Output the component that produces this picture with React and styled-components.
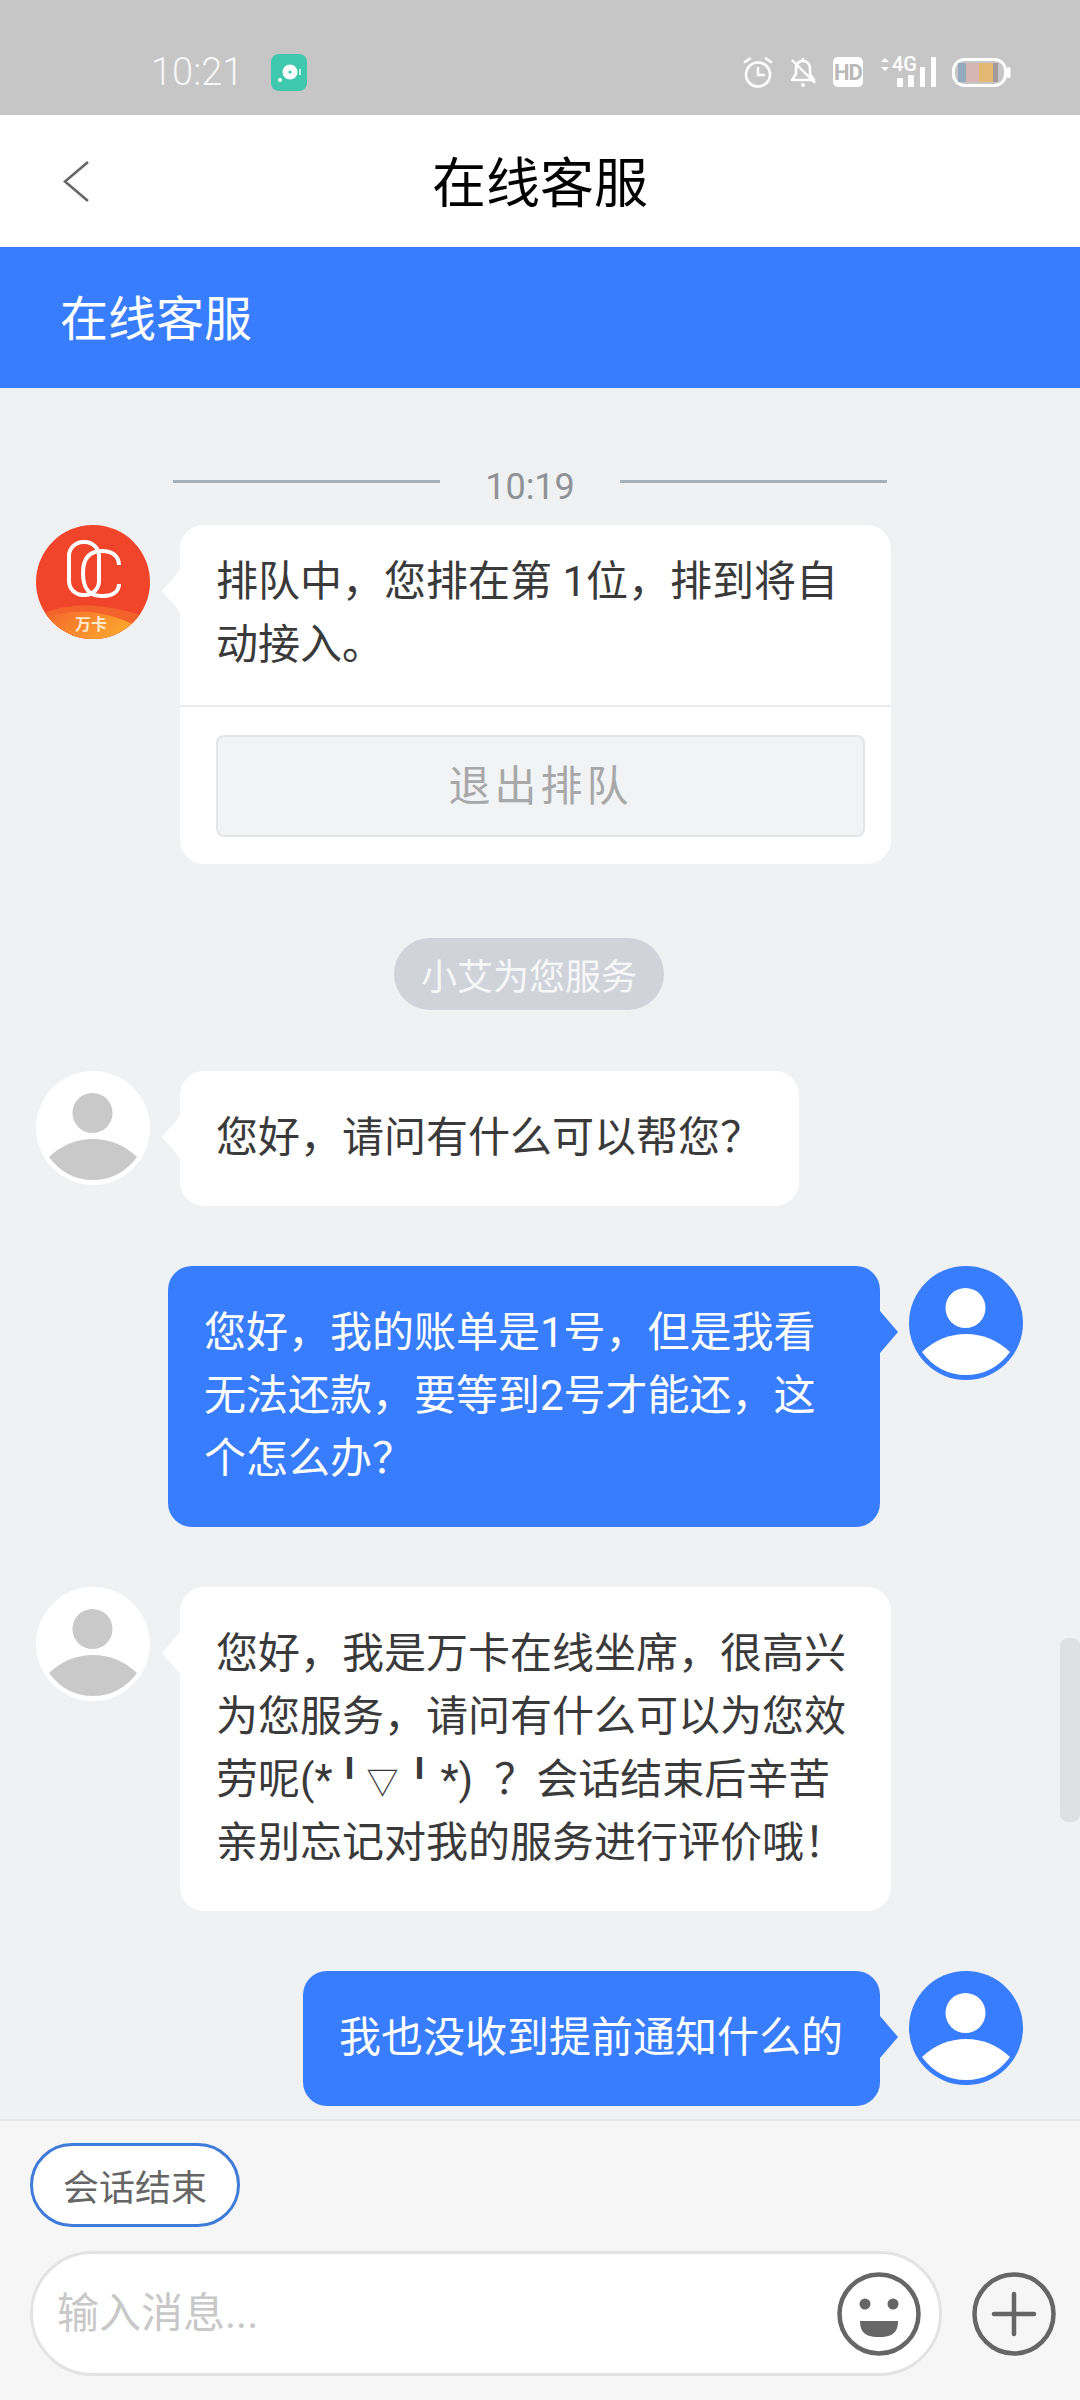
import React from "react"
import styled, { createGlobalStyle } from "styled-components"

const BLUE = "#377dfe"

function App() {
  return (
    <Screen>
      <GlobalStyle />
      <StatusBar>
        <StatusLeft>
          <Clock>10:21</Clock>
          <AppBadge />
        </StatusLeft>
        <StatusRight>
          <AlarmIcon />
          <MuteIcon />
          <HdBadge>HD</HdBadge>
          <SignalIcon />
          <BatteryIcon />
        </StatusRight>
      </StatusBar>

      <Header>
        <BackButton>
          <svg width="27" height="41" viewBox="0 0 27 41" fill="none">
            <path d="M25 1 L2 20.5 L25 40" stroke="#666" strokeWidth="2.6" />
          </svg>
        </BackButton>
        <HeaderTitle>在线客服</HeaderTitle>
      </Header>

      <ServiceBar>在线客服</ServiceBar>

      <Chat>
        <TimeRow>
          <TimeLine />
          <TimeText>10:19</TimeText>
          <TimeLine />
        </TimeRow>

        <Row>
          <BrandAvatar />
          <QueueBubble>
            <QueueText>
              <Line>排队中，您排在第 1位，排到将自</Line>
              <Line>动接入。</Line>
            </QueueText>
            <QueueAction>
              <LeaveButton>退出排队</LeaveButton>
            </QueueAction>
          </QueueBubble>
        </Row>

        <AgentPill>小艾为您服务</AgentPill>

        <Row>
          <PersonAvatar />
          <Bubble>您好，请问有什么可以帮您？</Bubble>
        </Row>

        <Row $mine>
          <Bubble $mine $wide>
            <Line>您好，我的账单是1号，但是我看</Line>
            <Line>无法还款，要等到2号才能还，这</Line>
            <Line>个怎么办？</Line>
          </Bubble>
          <PersonAvatar $mine />
        </Row>

        <Row>
          <PersonAvatar />
          <Bubble $wide>
            <Line>您好，我是万卡在线坐席，很高兴</Line>
            <Line>为您服务，请问有什么可以为您效</Line>
            <Line>
              劳呢(*<KaoEye $first>╹</KaoEye>
              <KaoMouth>▽</KaoMouth>
              <KaoEye>╹</KaoEye>*)<Query>？</Query>会话结束后辛苦
            </Line>
            <Line>亲别忘记对我的服务进行评价哦！</Line>
          </Bubble>
        </Row>

        <Row $mine>
          <Bubble $mine>我也没收到提前通知什么的</Bubble>
          <PersonAvatar $mine />
        </Row>

        <ScrollThumb />
      </Chat>

      <Footer>
        <QuickReply>会话结束</QuickReply>
        <InputRow>
          <InputBox>
            <Placeholder>输入消息...</Placeholder>
            <EmojiIcon />
          </InputBox>
          <PlusIcon />
        </InputRow>
      </Footer>
    </Screen>
  )
}

export default App

function AppBadge() {
  return (
    <svg width="36" height="37" viewBox="0 0 36 37">
      <rect width="36" height="37" rx="8" fill="#3fc8ae" />
      <circle cx="19" cy="18" r="7.5" fill="#fff" />
      <circle cx="19" cy="18" r="1.6" fill="#3fc8ae" />
      <circle cx="9" cy="26" r="2" fill="#fff" />
      <path d="M29 15v6" stroke="#fff" strokeWidth="1.4" />
    </svg>
  )
}

function AlarmIcon() {
  return (
    <svg width="30" height="31" viewBox="0 0 30 31" fill="none" stroke="#fff" strokeLinecap="round">
      <circle cx="15" cy="17.5" r="12" strokeWidth="2.6" />
      <path d="M15 11v7h6" strokeWidth="2.4" />
      <path d="M2 5l5-3.5M28 5l-5-3.5" strokeWidth="2.6" />
    </svg>
  )
}

function MuteIcon() {
  return (
    <svg width="28" height="31" viewBox="0 0 28 31" fill="none" stroke="#fff" strokeLinejoin="round">
      <path d="M14 4c-5 0-7 4-7 8v5l-4 6h22l-4-6v-5c0-4-2-8-7-8z" strokeWidth="2.6" />
      <path d="M14 1v3" strokeWidth="2.6" />
      <circle cx="14" cy="28" r="2" fill="#fff" stroke="none" />
      <path d="M3 3l23 23" strokeWidth="2.4" />
    </svg>
  )
}

function SignalIcon() {
  return (
    <SignalWrap>
      <svg width="57" height="31" viewBox="0 0 57 31" fill="#fff">
        <path d="M2 5l4-4 4 4zM2 10l4 4 4-4z" />
        <rect x="18" y="21" width="6" height="9" rx="1" />
        <rect x="29" y="18" width="6" height="12" rx="1" />
        <rect x="41" y="10" width="5" height="20" rx="1" />
        <rect x="52" y="0" width="5" height="30" rx="1" />
      </svg>
      <SignalLabel>4G</SignalLabel>
    </SignalWrap>
  )
}

function BatteryIcon() {
  return (
    <svg width="59" height="29" viewBox="0 0 59 29">
      <rect x="1.5" y="1.5" width="52" height="26" rx="11" fill="none" stroke="#fff" strokeWidth="3" />
      <rect x="55" y="9" width="3.5" height="11" rx="1.5" fill="#fff" />
      <rect x="6" y="5" width="8" height="19" fill="#93a9bd" />
      <rect x="14" y="5" width="13" height="19" fill="#d6b6b2" />
      <rect x="27" y="5" width="14" height="19" fill="#e3b873" />
      <rect x="41" y="5" width="5" height="19" fill="#a49b98" />
    </svg>
  )
}

function BrandAvatar() {
  return (
    <AvatarSvg viewBox="0 0 114 114">
      <defs>
        <clipPath id="brand-clip">
          <circle cx="57" cy="57" r="57" />
        </clipPath>
        <linearGradient id="brand-wave" x1="0" y1="0" x2="1" y2="0.4">
          <stop offset="0" stopColor="#f4672c" />
          <stop offset="1" stopColor="#fca52e" />
        </linearGradient>
      </defs>
      <circle cx="57" cy="57" r="57" fill="#f0452a" />
      <g clipPath="url(#brand-clip)">
        <path d="M8 88 Q34 78 62 81 Q88 84 110 92 V114 H8Z" fill="#f4622c" />
        <path d="M10 92 Q40 84 62 88 Q84 92 98 100 L98 114 H10Z" fill="url(#brand-wave)" />
      </g>
      <g fill="none" stroke="#fff" strokeWidth="4">
        <rect x="33" y="17" width="30" height="53" rx="14" />
        <path d="M83 40 C83 31 76 26 66 26 C54 26 47 33 47 48 C47 65 54 71 66 71 C76 71 83 67 83 59" />
      </g>
      <BrandLabel x="55" y="105" textAnchor="middle">万卡</BrandLabel>
    </AvatarSvg>
  )
}

function PersonAvatar({ $mine }) {
  const bg = $mine ? BLUE : "#fff"
  const fg = $mine ? "#fff" : "#c9c9c9"
  return (
    <AvatarSvg viewBox="0 0 114 114">
      <circle cx="57" cy="57" r="57" fill={bg} />
      <circle cx="56.5" cy="42" r="20" fill={fg} />
      <path d="M13 86 Q32 68 57 68 Q82 68 101 86 Q84 109 57 109 Q30 109 13 86Z" fill={fg} />
    </AvatarSvg>
  )
}

function EmojiIcon() {
  return (
    <svg width="84" height="84" viewBox="0 0 84 84">
      <circle cx="42" cy="42" r="39.5" fill="none" stroke="#666" strokeWidth="4.5" />
      <circle cx="28" cy="32" r="5.5" fill="#666" />
      <circle cx="56" cy="32" r="5.5" fill="#666" />
      <path d="M23 49 H61 C61 63 52 65 42 65 C32 65 23 63 23 49Z" fill="#666" />
    </svg>
  )
}

function PlusIcon() {
  return (
    <svg width="84" height="84" viewBox="0 0 84 84">
      <circle cx="42" cy="42" r="39.5" fill="none" stroke="#666" strokeWidth="4.5" />
      <path d="M42 22V62M22 42H62" stroke="#666" strokeWidth="4.5" strokeLinecap="round" />
    </svg>
  )
}

const GlobalStyle = createGlobalStyle`
  html, body {
    margin: 0;
    padding: 0;
    background: #eff1f3;
  }
  * {
    box-sizing: border-box;
  }
`

const Screen = styled.div`
  width: 1080px;
  height: 2400px;
  display: flex;
  flex-direction: column;
  overflow: hidden;
  background: #eff1f3;
  font-family: Roboto, "Noto Sans CJK SC", sans-serif;
  color: #333;
`

const StatusBar = styled.div`
  height: 115px;
  flex: none;
  background: #c6c6c6;
  display: flex;
  align-items: center;
  justify-content: space-between;
  padding: 29px 69px 0 151px;
`

const StatusLeft = styled.div`
  display: flex;
  align-items: center;
  gap: 28px;
`

const Clock = styled.span`
  font-size: 38px;
  font-weight: 300;
  color: #f6f6f6;
`

const StatusRight = styled.div`
  display: flex;
  align-items: center;
  gap: 16px;
`

const HdBadge = styled.span`
  width: 30px;
  height: 30px;
  border-radius: 5px;
  background: #fff;
  color: #b9b9b9;
  font-size: 22px;
  font-weight: 700;
  letter-spacing: -1px;
  display: flex;
  align-items: center;
  justify-content: center;
`

const SignalWrap = styled.span`
  position: relative;
  display: flex;
`

const SignalLabel = styled.span`
  position: absolute;
  left: 13px;
  top: -3px;
  font-size: 20px;
  line-height: 20px;
  font-weight: 500;
  color: #fff;
`

const Header = styled.div`
  height: 132px;
  flex: none;
  background: #fff;
  position: relative;
  display: flex;
  align-items: center;
  justify-content: center;
`

const BackButton = styled.span`
  position: absolute;
  left: 63px;
  top: 46px;
  display: flex;
`

const HeaderTitle = styled.div`
  font-size: 54px;
  color: #000;
  margin-bottom: 3px;
`

const ServiceBar = styled.div`
  height: 141px;
  flex: none;
  background: ${BLUE};
  color: #fff;
  font-size: 48px;
  padding: 0 0 5px 60px;
  display: flex;
  align-items: center;
`

const Chat = styled.div`
  flex: 1;
  min-height: 0;
  position: relative;
  overflow: hidden;
  display: flex;
  flex-direction: column;
  padding-top: 73px;

  & > * {
    flex: none;
  }
`

const TimeRow = styled.div`
  width: 714px;
  margin: 0 0 12px 173px;
  height: 52px;
  display: flex;
  align-items: center;
  justify-content: space-between;
`

const TimeLine = styled.span`
  width: 267px;
  height: 3px;
  background: #a6b1ba;
  margin-bottom: 12px;
`

const TimeText = styled.span`
  font-size: 36px;
  color: #8f9296;
`

const Row = styled.div`
  display: flex;
  align-items: flex-start;
  justify-content: ${(p) => (p.$mine ? "flex-end" : "flex-start")};
  gap: ${(p) => (p.$mine ? "29px" : "30px")};
  padding: ${(p) => (p.$mine ? "0 57px 0 0" : "0 0 0 36px")};
  margin-bottom: 60px;
`

const AvatarSvg = styled.svg`
  width: 114px;
  height: 114px;
  flex: none;
  display: block;
`

const BrandLabel = styled.text`
  font-size: 16px;
  font-weight: 700;
  fill: #ffeccd;
`

const BubbleBase = styled.div`
  position: relative;
  border-radius: 24px;
  background: ${(p) => (p.$mine ? BLUE : "#fff")};
  color: ${(p) => (p.$mine ? "#fff" : "#3a3a3a")};
  font-size: 42px;
  line-height: 63px;

  &::before {
    content: "";
    position: absolute;
    top: 45px;
    width: 0;
    height: 0;
    border-top: 21px solid transparent;
    border-bottom: 21px solid transparent;
    ${(p) =>
      p.$mine
        ? `right: -18px; border-left: 18px solid ${BLUE};`
        : "left: -18px; border-right: 18px solid #fff;"}
  }
`

const Bubble = styled(BubbleBase)`
  width: ${(p) => (p.$wide ? (p.$mine ? "712px" : "711px") : "auto")};
  padding: 35px 37px 37px 36px;
`

const Line = styled.div`
  height: 63px;
  white-space: nowrap;
`

const KaoEye = styled.span`
  letter-spacing: ${(p) => (p.$first ? "-4px" : "0")};
  margin-left: ${(p) => (p.$first ? "-4px" : "0")};
`

const KaoMouth = styled.span`
  font-size: 32px;
`

const Query = styled.span`
  margin-left: 21px;
`

const QueueBubble = styled(BubbleBase)`
  width: 711px;
`

const QueueText = styled.div`
  padding: 25px 37px 29px 36px;
  border-bottom: 2px solid #ebebeb;
`

const QueueAction = styled.div`
  padding: 28px 26px 27px 36px;
`

const LeaveButton = styled.div`
  height: 102px;
  border: 2px solid #e4e5e7;
  border-radius: 8px;
  background: #f2f3f5;
  color: #a8a8a8;
  font-size: 42px;
  letter-spacing: 4px;
  display: flex;
  align-items: center;
  justify-content: center;
`

const AgentPill = styled.div`
  align-self: flex-start;
  margin: 14px 0 61px 394px;
  width: 270px;
  height: 72px;
  border-radius: 36px;
  background: #d0d3da;
  color: #f7f7f7;
  font-size: 36px;
  display: flex;
  align-items: center;
  justify-content: center;
`

const ScrollThumb = styled.div`
  position: absolute;
  right: 0;
  top: 1250px;
  width: 20px;
  height: 184px;
  border-radius: 8px;
  background: #dfe0e2;
`

const Footer = styled.div`
  height: 281px;
  flex: none;
  background: #f6f6f6;
  border-top: 2px solid #e8e8e8;
  padding: 22px 24px 0 30px;
  display: flex;
  flex-direction: column;
  align-items: flex-start;
  gap: 24px;
`

const QuickReply = styled.div`
  width: 210px;
  height: 84px;
  border: 3px solid #3f7bd8;
  border-radius: 42px;
  background: #fff;
  color: #666;
  font-size: 36px;
  display: flex;
  align-items: center;
  justify-content: center;
`

const InputRow = styled.div`
  width: 100%;
  display: flex;
  align-items: center;
  justify-content: space-between;
`

const InputBox = styled.div`
  width: 912px;
  height: 125px;
  border: 3px solid #e3e3e3;
  border-radius: 63px;
  background: #fff;
  display: flex;
  align-items: center;
  justify-content: space-between;
  padding: 0 18px 0 24px;
`

const Placeholder = styled.span`
  font-size: 42px;
  color: #c8c8c8;
  margin-bottom: 8px;
`
